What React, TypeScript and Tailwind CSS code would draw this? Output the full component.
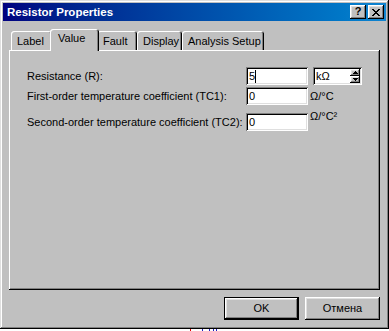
import React from "react";

const raised =
  "shadow-[inset_-1px_-1px_0_#000,inset_1px_1px_0_#fff,inset_-2px_-2px_0_#808080,inset_2px_2px_0_#dfdfdf]";
const sunken =
  "shadow-[inset_1px_1px_0_#808080,inset_-1px_-1px_0_#fff,inset_2px_2px_0_#000,inset_-2px_-2px_0_#dfdfdf]";

function Tab({ label, w, selected }: { label: string; w: string; selected?: boolean }) {
  if (selected) {
    return (
      <div
        className={`relative z-10 -mx-[2px] -mb-[1px] h-[22px] ${w} bg-[#c0c0c0] rounded-t-[3px] shadow-[inset_1px_1px_0_#fff,inset_-1px_0_0_#000,inset_-2px_0_0_#808080] flex items-start pl-[8px] pt-[3px] text-[11px] leading-[13px] text-black`}
      >
        {label}
      </div>
    );
  }
  return (
    <div
      className={`h-[19px] ${w} bg-[#c0c0c0] rounded-t-[3px] shadow-[inset_1px_1px_0_#fff,inset_-1px_0_0_#000,inset_-2px_0_0_#808080] flex items-start pl-[6px] pt-[4px] text-[11px] leading-[13px] text-black`}
    >
      {label}
    </div>
  );
}

export default function App() {
  return (
    <div className="w-[389px] h-[331px] bg-white font-['Liberation_Sans',Arial,sans-serif] select-none">
      <div
        className={`w-[389px] h-[329px] bg-[#c0c0c0] p-[3px] flex flex-col shadow-[inset_-1px_-1px_0_#000,inset_1px_1px_0_#dfdfdf,inset_-2px_-2px_0_#808080,inset_2px_2px_0_#fff]`}
      >
        {/* Title bar */}
        <div className="h-[18px] bg-gradient-to-r from-[#000080] to-[#1084d0] flex items-center justify-between pl-[4px] pr-[2px]">
          <span className="text-white font-bold text-[11.5px] leading-[14px]">Resistor Properties</span>
          <div className="flex items-center gap-[2px]">
            <div className={`w-[16px] h-[14px] bg-[#c0c0c0] ${raised} flex items-center justify-center text-black font-bold text-[11px] leading-[11px] pb-[1px]`}>
              ?
            </div>
            <div className={`w-[16px] h-[14px] bg-[#c0c0c0] ${raised} flex items-center justify-center`}>
              <svg width="8" height="7" viewBox="0 0 8 7" shapeRendering="crispEdges">
                <path d="M0 0h2v1h-2zM6 0h2v1h-2zM1 1h2v1h-2zM5 1h2v1h-2zM2 2h4v1h-4zM3 3h2v1h-2zM2 4h4v1h-4zM1 5h2v1h-2zM5 5h2v1h-2zM0 6h2v1h-2zM6 6h2v1h-2z" fill="#000" />
              </svg>
            </div>
          </div>
        </div>

        {/* Body */}
        <div className="flex flex-col px-[6px] pt-[8px]">
          <div className="flex items-end h-[21px] pl-[2px]">
            <Tab label="Label" w="w-[41px]" />
            <Tab label="Value" w="w-[49px]" selected />
            <Tab label="Fault" w="w-[40px]" />
            <Tab label="Display" w="w-[45px]" />
            <Tab label="Analysis Setup" w="w-[82px]" />
          </div>

          {/* Panel */}
          <div className="h-[240px] bg-[#c0c0c0] shadow-[inset_-1px_-1px_0_#000,inset_1px_1px_0_#fff,inset_-2px_-2px_0_#808080] pt-[17px] pl-[18px] text-[11px] leading-[13px] text-black">
            {/* Row 1 */}
            <div className="flex items-center h-[18px]">
              <div className="w-[219px]">Resistance (R):</div>
              <div className={`w-[62px] h-[18px] bg-white ${sunken} flex items-center pl-[3px]`}>
                <span>5</span>
                <span className="w-[1px] h-[13px] bg-black" />
              </div>
              <div className={`ml-[5px] w-[49px] h-[18px] bg-white ${sunken} flex items-stretch p-[2px]`}>
                <div className="flex-1 flex items-center pl-[1px]">kΩ</div>
                <div className="w-[10px] flex flex-col">
                  <div className={`flex-1 bg-[#c0c0c0] ${raised} flex items-center justify-center`}>
                    <svg width="5" height="3" viewBox="0 0 5 3" shapeRendering="crispEdges">
                      <path d="M2 0h1v1h-1zM1 1h3v1h-3zM0 2h5v1h-5z" fill="#000" />
                    </svg>
                  </div>
                  <div className={`flex-1 bg-[#c0c0c0] ${raised} flex items-center justify-center`}>
                    <svg width="5" height="3" viewBox="0 0 5 3" shapeRendering="crispEdges">
                      <path d="M0 0h5v1h-5zM1 1h3v1h-3zM2 2h1v1h-1z" fill="#000" />
                    </svg>
                  </div>
                </div>
              </div>
            </div>

            {/* Row 2 */}
            <div className="flex items-center h-[18px] mt-[2px]">
              <div className="w-[219px]">First-order temperature coefficient (TC1):</div>
              <div className={`w-[62px] h-[18px] bg-white ${sunken} flex items-center pl-[3px]`}>0</div>
              <div className="ml-[2px]">Ω/°C</div>
            </div>

            {/* Row 3 */}
            <div className="flex items-center h-[18px] mt-[8px]">
              <div className="w-[219px]">Second-order temperature coefficient (TC2):</div>
              <div className={`w-[62px] h-[18px] bg-white ${sunken} flex items-center pl-[3px]`}>0</div>
              <div className="ml-[2px] self-start -mt-[3px]">Ω/°C²</div>
            </div>
          </div>

          {/* Buttons */}
          <div className="flex justify-end gap-[6px] mt-[7px] text-[11px] leading-[13px] text-black">
            <div className="w-[75px] h-[23px] border border-black bg-[#c0c0c0]">
              <div className={`w-full h-full ${raised} flex items-center justify-center`}>OK</div>
            </div>
            <div className={`w-[75px] h-[23px] bg-[#c0c0c0] ${raised} flex items-center justify-center`}>Отмена</div>
          </div>
        </div>
      </div>
      <div className="flex h-[2px]">
        <span className="ml-[190px] w-[1px] bg-[#e00000]" />
        <span className="ml-[11px] w-[1px] bg-[#2020c0]" />
        <span className="ml-[6px] w-[1px] bg-[#2020c0]" />
        <span className="ml-[3px] w-[1px] bg-[#2020c0]" />
        <span className="ml-[2px] w-[1px] bg-[#2020c0]" />
      </div>
    </div>
  );
}
